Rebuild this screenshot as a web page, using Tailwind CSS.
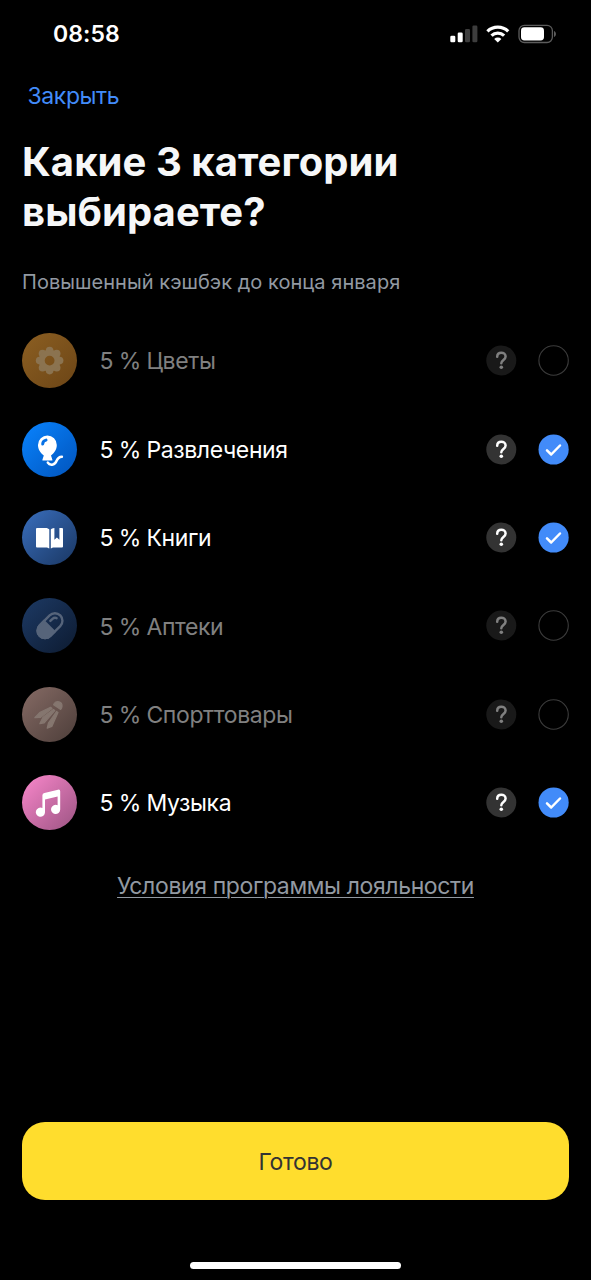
<!DOCTYPE html>
<html lang="ru">
<head>
<meta charset="utf-8">
<title>Категории кэшбэка</title>
<script src="https://cdn.jsdelivr.net/npm/@tailwindcss/browser@4"></script>
</head>
<body class="bg-black">
<svg class="hidden">
  <defs>
    <symbol id="help" viewBox="0 0 31 31"><circle cx="15.3" cy="15.5" r="15" fill="#333"/><path d="M11.2 11.7C11.3 9.2 13 7.8 15.3 7.8s4.3 1.5 4.3 3.7c0 3.4-4.3 3.4-4.3 6.8" fill="none" stroke="#fff" stroke-width="2.5" stroke-linecap="round"/><circle cx="15.3" cy="22.3" r="1.8" fill="#fff"/></symbol>
    <symbol id="on" viewBox="0 0 31 31"><circle cx="15.6" cy="15.5" r="15.1" fill="#428bf9"/><path d="M9 16.3l4.2 4.2 8.8-9" fill="none" stroke="#fff" stroke-width="2.5" stroke-linecap="round" stroke-linejoin="round"/></symbol>
    <symbol id="off" viewBox="0 0 31 31"><circle cx="15.6" cy="15.5" r="14.7" fill="none" stroke="#3c3c3c" stroke-width="1.1"/></symbol>
  </defs>
</svg>
<div class="w-[591px] h-[1280px] bg-black overflow-hidden flex flex-col font-['Inter',sans-serif] text-white">
  <header class="h-[67px] shrink-0 flex items-center justify-between pl-[53px] pr-[34px]">
    <span class="pt-[2px] text-[23px] font-semibold tracking-[0.1px]">08:58</span>
    <svg class="w-[107px] h-[22px]" viewBox="450 22.5 107 22">
      <g fill="#fff"><rect x="450.3" y="35.2" width="5" height="6.6" rx="1.3"/><rect x="457.7" y="32" width="5" height="9.8" rx="1.3"/></g>
      <g fill="#3d3d3d"><rect x="465" y="28.5" width="5" height="13.3" rx="1.3"/><rect x="472.4" y="25" width="5" height="16.8" rx="1.3"/></g>
      <g fill="none" stroke="#fff" stroke-width="3.2"><path d="M487.4 30.8a15 15 0 0 1 20.800 0"/><path d="M491.500 35.100a9 9 0 0 1 12.600 0"/></g>
      <path d="M494.200 38.500a5.200 5.200 0 0 1 7.200 0l-3.600 3.600z" fill="#fff"/>
      <rect x="519" y="24.8" width="33.4" height="17.2" rx="5.4" fill="none" stroke="#5c5c5c" stroke-width="1.3"/>
      <rect x="521" y="26.8" width="23" height="13.2" rx="3.4" fill="#fff"/>
      <path d="M554 30.5v6c2.6-1 2.6-5 0-6z" fill="#5c5c5c"/>
    </svg>
  </header>
  <nav class="h-[58px] shrink-0 flex items-center pl-[27.5px] text-[23px] leading-none tracking-[-0.4px] text-[#428bf9]"><a>Закрыть</a></nav>
  <main class="flex-1 flex flex-col px-[22px]">
    <h1 class="mt-[12px] text-[40px] leading-[50px] font-bold tracking-[0.07px] text-[#f6f7f8]">Какие 3 категории<br>выбираете?</h1>
    <p class="mt-[30px] h-[30px] leading-[30px] text-[20px] tracking-[0.04px] text-[#9299a2] whitespace-nowrap">Повышенный кэшбэк до конца января</p>
    <ul class="mt-[19.5px] flex flex-col text-[23px] tracking-[-0.38px]">
      <li class="h-[88.4px] flex items-center">
        <svg class="w-[55px] h-[55px] shrink-0 rounded-full bg-linear-to-br from-[#8c5f22] to-[#6c4516]" viewBox="0 0 55 55"><g fill="#8b7350"><circle cx="27.6" cy="17.6" r="3.8"/><circle cx="27.6" cy="37.6" r="3.8"/><circle cx="17.6" cy="27.6" r="3.8"/><circle cx="37.6" cy="27.6" r="3.8"/><circle cx="20.5" cy="20.5" r="3.8"/><circle cx="34.7" cy="20.5" r="3.8"/><circle cx="20.5" cy="34.7" r="3.8"/><circle cx="34.7" cy="34.7" r="3.8"/></g><circle cx="27.6" cy="27.6" r="7.9" fill="none" stroke="#8b7350" stroke-width="6"/></svg>
        <span class="ml-[22.5px] pt-[2px] flex-1 text-[#808080]"><span class="tracking-[-0.65px]">5 % </span>Цветы</span>
        <svg class="w-[31px] h-[31px] opacity-50"><use href="#help"/></svg><svg class="ml-[21px] w-[31px] h-[31px]"><use href="#off"/></svg>
      </li>
      <li class="h-[88.4px] flex items-center">
        <svg class="w-[55px] h-[55px] shrink-0 rounded-full bg-linear-to-br from-[#0a84ff] to-[#0254bc]" viewBox="0 0 55 55"><path d="M25.400 13.600a9.400 9.400 0 0 1 9.400 9.400c0 4.600-2.600 8.200-5.800 10.400l1.400 4.300q.2.900-.7.900h-8.600q-.9 0-.7-.9l1.400-4.300c-3.200-2.200-5.800-5.800-5.800-10.400a9.400 9.400 0 0 1 9.400-9.400z" fill="#fff"/><path d="M20.700 22c.1-2 1.200-3.400 3.300-3.900" fill="none" stroke="#0671e6" stroke-width="3" stroke-linecap="round"/><path d="M25.800 40.600c1.100 1.800 3 2.300 5.100 1.900 5.200-1 2.200-7.400 9-7.700" fill="none" stroke="#fff" stroke-width="2.500" stroke-linecap="round"/></svg>
        <span class="ml-[22.5px] pt-[2px] flex-1"><span class="tracking-[-0.65px]">5 % </span>Развлечения</span>
        <svg class="w-[31px] h-[31px]"><use href="#help"/></svg><svg class="ml-[21px] w-[31px] h-[31px]"><use href="#on"/></svg>
      </li>
      <li class="h-[88.4px] flex items-center">
        <svg class="w-[55px] h-[55px] shrink-0 rounded-full bg-linear-to-br from-[#3a6fbe] to-[#1a3763]" viewBox="0 0 55 55"><path d="M15 18h8.500c1.800 0 3.200.6 3.800 1.600v19c-.8-.9-2-1.200-3.800-1.200H15q-1 0-1-1V19q0-1 1-1z" fill="#fff"/><path d="M28.800 19.600c.6-.9 1.800-1.500 3.600-1.600v11.800l2.500-2.200 2.500 2.200V18H40q1 0 1 1v17.400q0 1-1 1h-7.500c-1.800 0-2.900.3-3.700 1.200z" fill="#fff"/></svg>
        <span class="ml-[22.5px] pt-[2px] flex-1"><span class="tracking-[-0.65px]">5 % </span>Книги</span>
        <svg class="w-[31px] h-[31px]"><use href="#help"/></svg><svg class="ml-[21px] w-[31px] h-[31px]"><use href="#on"/></svg>
      </li>
      <li class="h-[88.4px] flex items-center">
        <svg class="w-[55px] h-[55px] shrink-0 rounded-full bg-linear-to-br from-[#1d3a65] to-[#0d1b31]" viewBox="0 0 55 55"><g transform="rotate(-45 28 27.7)"><rect x="13.5" y="20.2" width="29" height="15" rx="7.5" fill="none" stroke="#56647a" stroke-width="2.4"/><path d="M28 19v17.400h-7a8.700 8.700 0 0 1 0-17.400z" fill="#56647a"/><path d="M31.600 24.600h3q2.600.2 3.400 2.400" fill="none" stroke="#56647a" stroke-width="2.400" stroke-linecap="round"/></g></svg>
        <span class="ml-[22.5px] pt-[2px] flex-1 text-[#808080]"><span class="tracking-[-0.65px]">5 % </span>Аптеки</span>
        <svg class="w-[31px] h-[31px] opacity-50"><use href="#help"/></svg><svg class="ml-[21px] w-[31px] h-[31px]"><use href="#off"/></svg>
      </li>
      <li class="h-[88.4px] flex items-center">
        <svg class="w-[55px] h-[55px] shrink-0 rounded-full bg-linear-to-br from-[#866b65] to-[#4d3e3a]" viewBox="0 0 55 55"><g fill="#85766f" stroke="#85766f" stroke-width="1.2" stroke-linejoin="round"><path d="M31.600 17.800l.8-1.400c2-3 8-2 7.600 3-.1 1.200-.6 2.200-1.300 3z"/><path d="M28.600 20.300L17.600 25.600 12.800 30.600 18.600 30.400 30 21.500z"/><path d="M31.400 22.600L21 30.200 17.800 36.700 22.200 35.800 32.800 23.600z"/><path d="M34.600 24.400L26.400 36.200 25.200 41.200 29.800 39.400 36 25.400z"/></g></svg>
        <span class="ml-[22.5px] pt-[2px] flex-1 text-[#808080]"><span class="tracking-[-0.65px]">5 % </span>Спорттовары</span>
        <svg class="w-[31px] h-[31px] opacity-50"><use href="#help"/></svg><svg class="ml-[21px] w-[31px] h-[31px]"><use href="#off"/></svg>
      </li>
      <li class="h-[88.4px] flex items-center">
        <svg class="w-[55px] h-[55px] shrink-0 rounded-full bg-linear-to-br from-[#fb88cc] to-[#9c5483]" viewBox="0 0 55 55"><path d="M20.400 20.200q0-2 2-2.300L36 14.700q2.200-.5 2.200 1.600v18.200a4.600 4.600 0 1 1-2.600-4.200v-8.800L23 24.400v12.800a4.600 4.600 0 1 1-2.600-4.200z" fill="#fff"/></svg>
        <span class="ml-[22.5px] pt-[2px] flex-1"><span class="tracking-[-0.65px]">5 % </span>Музыка</span>
        <svg class="w-[31px] h-[31px]"><use href="#help"/></svg><svg class="ml-[21px] w-[31px] h-[31px]"><use href="#on"/></svg>
      </li>
    </ul>
    <a class="mt-[24.5px] self-center text-[23px] leading-[30px] tracking-[-0.38px] text-[#9299a2] underline decoration-1 underline-offset-[3px] whitespace-nowrap">Условия программы лояльности</a>
    <button class="mt-auto mb-[80px] h-[78px] pt-[2px] rounded-[23px] bg-[#ffdd2d] text-[23px] tracking-[-0.35px] text-[#333]">Готово</button>
  </main>
  <div class="absolute left-[190px] top-[1262px] w-[211px] h-[7px] rounded-full bg-white"></div>
</div>
</body>
</html>
